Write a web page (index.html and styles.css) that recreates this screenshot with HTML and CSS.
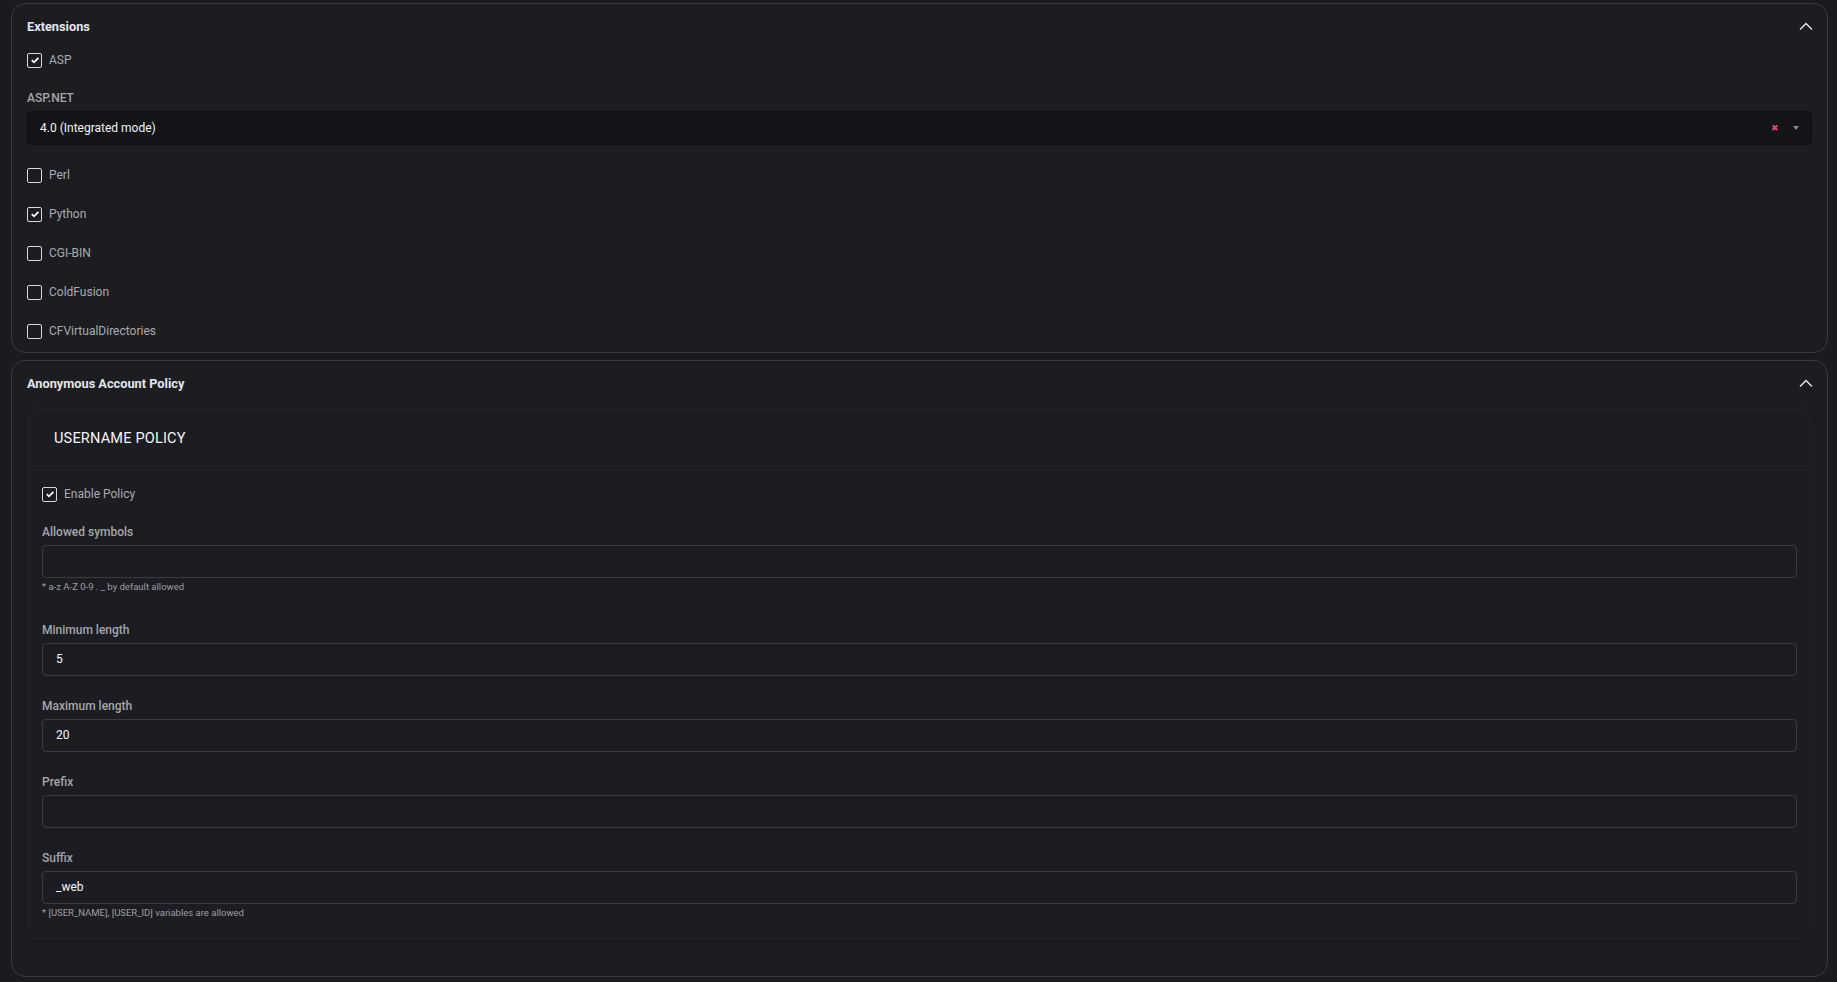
FILE: index.html
```html
<!DOCTYPE html>
<html lang="en">
<head>
    <meta charset="UTF-8">
    <meta name="viewport" content="width=device-width, initial-scale=1.0">
    <title>Site settings</title>
    <link rel="stylesheet" href="styles.css">
</head>
<body>
    <section class="panel">
        <div class="panel-header">
            <h2>Extensions</h2>
            <svg class="chevron" width="14" height="8" viewBox="0 0 14 8"><path d="M1 7.5L7 1.5l6 6" fill="none" stroke="currentColor" stroke-width="1.4"/></svg>
        </div>
        <div class="panel-body extensions">
            <label class="check checked"><span class="box"><svg width="10" height="10" viewBox="0 0 10 10"><path d="M1.8 5.2l2.2 2.1L8.4 2.8" fill="none" stroke="#fff" stroke-width="1.8"/></svg></span>ASP</label>

            <div class="field select-field">
                <div class="field-label">ASP.NET</div>
                <div class="select">
                    <span class="select-value">4.0 (Integrated mode)</span>
                    <span class="select-clear">&#x2716;</span>
                    <span class="select-caret"></span>
                </div>
            </div>

            <div class="check-list">
                <label class="check"><span class="box"></span>Perl</label>
                <label class="check checked"><span class="box"><svg width="10" height="10" viewBox="0 0 10 10"><path d="M1.8 5.2l2.2 2.1L8.4 2.8" fill="none" stroke="#fff" stroke-width="1.8"/></svg></span>Python</label>
                <label class="check"><span class="box"></span>CGI-BIN</label>
                <label class="check"><span class="box"></span>ColdFusion</label>
                <label class="check"><span class="box"></span>CFVirtualDirectories</label>
            </div>
        </div>
    </section>

    <section class="panel">
        <div class="panel-header">
            <h2>Anonymous Account Policy</h2>
            <svg class="chevron" width="14" height="8" viewBox="0 0 14 8"><path d="M1 7.5L7 1.5l6 6" fill="none" stroke="currentColor" stroke-width="1.4"/></svg>
        </div>
        <div class="panel-body policy">
            <div class="sub-card">
                <div class="sub-card-header">USERNAME POLICY</div>
                <div class="sub-card-body">
                    <label class="check checked"><span class="box"><svg width="10" height="10" viewBox="0 0 10 10"><path d="M1.8 5.2l2.2 2.1L8.4 2.8" fill="none" stroke="#fff" stroke-width="1.8"/></svg></span>Enable Policy</label>

                    <div class="field">
                        <div class="field-label">Allowed symbols</div>
                        <div class="input"></div>
                        <div class="hint">* a-z A-Z 0-9 . _ by default allowed</div>
                    </div>

                    <div class="field">
                        <div class="field-label">Minimum length</div>
                        <div class="input">5</div>
                    </div>

                    <div class="field">
                        <div class="field-label">Maximum length</div>
                        <div class="input">20</div>
                    </div>

                    <div class="field">
                        <div class="field-label">Prefix</div>
                        <div class="input"></div>
                    </div>

                    <div class="field last">
                        <div class="field-label">Suffix</div>
                        <div class="input">_web</div>
                        <div class="hint">* [USER_NAME], [USER_ID] variables are allowed</div>
                    </div>
                </div>
            </div>
        </div>
    </section>
</body>
</html>
```

FILE: styles.css
```css
body {
    font-family: Roboto, "Liberation Sans", Arial, sans-serif;
    font-size: 12px;
    margin: 0;
    padding: 3px 9px 5px 11px;
    background-color: #1a1b1f;
    color: #a7a9ae;
    display: flex;
    flex-direction: column;
    gap: 7px;
}
.panel {
    background-color: #1c1d21;
    border: 1px solid #393a3f;
    border-radius: 14px;
    padding: 0 15px;
}
.panel-header {
    height: 44px;
    display: flex;
    align-items: center;
    justify-content: space-between;
}
.panel-header h2 {
    margin: 0;
    font-size: 12.75px;
    font-weight: 700;
    color: #e2e6ee;
}
.chevron {
    color: #e4ebf5;
    margin-right: -1px;
}
.extensions {
    padding: 4px 0 13px;
}
.check {
    display: flex;
    align-items: center;
    gap: 7px;
    height: 16px;
    line-height: 16px;
    color: #a9abb0;
}
.box {
    width: 13px;
    height: 13px;
    border: 1.5px solid #d6d8dc;
    border-radius: 2px;
    display: flex;
    align-items: center;
    justify-content: center;
}
.field {
    margin-top: 22px;
}
.field-label {
    line-height: 16px;
    font-weight: 500;
    color: #a4a6ab;
    margin-bottom: 5px;
}
.select {
    height: 32px;
    background-color: #131418;
    border: 1px solid #0e0f12;
    border-radius: 4px;
    display: flex;
    align-items: center;
    padding: 0 12px 0 12px;
    color: #f2f3f5;
}
.select-value {
    flex: 1;
}
.select-clear {
    color: #e2457c;
    font-size: 9px;
    margin-right: 14px;
}
.select-caret {
    width: 0;
    height: 0;
    border-left: 3.5px solid transparent;
    border-right: 3.5px solid transparent;
    border-top: 4px solid #85878c;
}
.check-list {
    margin-top: 22px;
    display: flex;
    flex-direction: column;
    gap: 23px;
}
.policy {
    padding: 3px 0 36px;
}
.sub-card {
    background-color: #1c1d22;
    border: 1px solid #212226;
    border-radius: 10px;
    box-shadow: 0 1px 3px rgba(0, 0, 0, 0.35);
}
.sub-card-header {
    height: 60px;
    line-height: 60px;
    padding-left: 26px;
    font-size: 14.5px;
    color: #f4f5f7;
    letter-spacing: 0.2px;
    border-bottom: 1px solid #202125;
}
.sub-card-body {
    padding: 16px 14px 20px;
}
.sub-card-body .field {
    margin-top: 22px;
}
.input {
    height: 31px;
    border: 1px solid #3b3c41;
    border-radius: 4px;
    padding: 0 13px;
    line-height: 31px;
    color: #f4f5f7;
}
.hint {
    font-size: 9.5px;
    line-height: 12px;
    margin-top: 3px;
    padding-bottom: 7px;
    color: #9c9ea3;
}
.field.last .hint {
    padding-bottom: 0;
}
```
